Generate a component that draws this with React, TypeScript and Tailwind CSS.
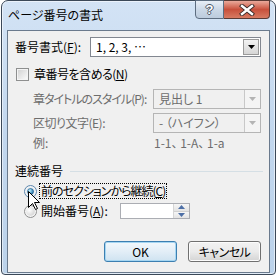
import React from 'react'

const jp = "font-['Noto_Sans_CJK_JP','Noto_Sans',sans-serif] [font-feature-settings:'palt']"

function Combo({ value, disabled, w }: { value: string; disabled?: boolean; w: string }) {
  return (
    <div className={`${w} h-[20px] flex border ${disabled ? 'border-[#b5b5b5] bg-[#f0f0f0] text-[#6d6d6d]' : 'border-[#828790] bg-white text-black'}`}>
      <div className="flex-1 pl-[5px] leading-[18px] whitespace-nowrap">{value}</div>
      <div className={`w-[16px] flex items-center justify-center border-l ${disabled ? 'border-[#c8c8c8] bg-[#f4f4f4]' : 'border-[#9a9a9a] bg-gradient-to-b from-[#f2f2f2] to-[#d6d6d6] m-[1px] border'}`}>
        <svg width="7" height="4" viewBox="0 0 7 4">
          <path d="M0 0h7L3.5 4z" fill={disabled ? '#b4b4b4' : '#000'} />
        </svg>
      </div>
    </div>
  )
}

function Radio({ checked }: { checked?: boolean }) {
  return (
    <svg width="13" height="13" viewBox="0 0 13 13" className="shrink-0">
      <defs>
        <radialGradient id={checked ? 'rc' : 'ru'} cx="0.35" cy="0.35" r="0.7">
          <stop offset="0" stopColor={checked ? '#bdf1ff' : '#ffffff'} />
          <stop offset="1" stopColor={checked ? '#1c6fa8' : '#d6d6d6'} />
        </radialGradient>
      </defs>
      <circle cx="6.5" cy="6.5" r="6" fill="#f4f4f4" stroke={checked ? '#5c86ad' : '#8e8f8f'} />
      <circle cx="6.5" cy="6.5" r="4.3" fill={checked ? '#e4eef6' : 'url(#ru)'} />
      {checked && <circle cx="6.5" cy="6.5" r="3" fill="url(#rc)" stroke="#1a4f7a" strokeWidth="0.6" />}
    </svg>
  )
}

export default function App() {
  return (
    <div className={`relative w-[277px] h-[275px] overflow-hidden bg-white text-[12px] text-black ${jp}`}>
      <div className="ml-[1px] w-[275px] h-[275px] flex flex-col rounded-t-[7px] rounded-b-[4px] border border-[#3b4858] bg-gradient-to-b from-[#d3e3f5] via-[#c2d7ee] to-[#bcd3eb] px-[5px] pb-[1px] shadow-[inset_0_0_0_1px_rgba(255,255,255,0.55)]">
        {/* title bar */}
        <div className="flex h-[29px]">
          <span className="pl-[1px] pt-[6px] leading-[16px] text-[12px] text-black whitespace-nowrap">ページ番号の書式</span>
          <div className="ml-auto -mt-[1px] flex h-[19px]">
            <div className="w-[29px] flex items-center justify-center rounded-bl-[4px] border border-[#5d6d80] bg-gradient-to-b from-[#e8eef6] via-[#cbd8e7] to-[#bccbdd]">
              <span className="font-['Liberation_Sans',sans-serif] font-bold text-[13px] leading-none text-white [text-shadow:1px_0_0_#4a5666,-1px_0_0_#4a5666,0_1px_0_#4a5666,0_-1px_0_#4a5666]">?</span>
            </div>
            <div className="w-[46px] flex items-center justify-center rounded-br-[4px] border border-l-0 border-[#5a3a34] bg-gradient-to-b from-[#e9a99b] via-[#c8503c] to-[#d77a62]">
              <svg width="16" height="12" viewBox="0 0 16 12">
                <path d="M3 2l10 8M13 2L3 10" stroke="#3a2a28" strokeWidth="4.2" strokeLinecap="square" />
                <path d="M3 2l10 8M13 2L3 10" stroke="#fff" strokeWidth="2.4" strokeLinecap="square" />
              </svg>
            </div>
          </div>
        </div>

        {/* client */}
        <div className="flex-1 flex flex-col border border-[#6a7a8d] bg-[#f0f0f0] pr-[8px] whitespace-nowrap">
          <div className="mt-[6px] flex h-[20px] items-center">
            <span className="pl-[7px] shrink-0">番号書式(<span className="underline">F</span>):</span>
            <div className="ml-auto">
              <Combo value="1, 2, 3, …" w="w-[171px]" />
            </div>
          </div>

          <div className="mt-[10px] flex h-[14px] items-center">
            <div className="ml-[8px] w-[13px] h-[13px] border border-[#8e8f8f] bg-[#f4f4f4] p-[1px]">
              <div className="w-full h-full bg-gradient-to-br from-[#d4d4d4] to-[#f9f9f9]" />
            </div>
            <span className="ml-[5px] tracking-[-0.5px]">章番号を含める(<span className="underline">N</span>)</span>
          </div>

          <div className="mt-[8px] flex h-[20px] items-center text-[#6d6d6d]">
            <span className="pl-[25px] shrink-0 tracking-[-1px]">章タイトルのスタイル(P):</span>
            <div className="ml-auto">
              <Combo value="見出し 1" disabled w="w-[108px]" />
            </div>
          </div>

          <div className="mt-[4px] flex h-[20px] items-center text-[#6d6d6d]">
            <span className="pl-[25px] shrink-0 tracking-[-0.5px]">区切り文字(E):</span>
            <div className="ml-auto">
              <Combo value="-  （ハイフン）" disabled w="w-[108px]" />
            </div>
          </div>

          <div className="mt-[2px] flex h-[16px] items-center text-[#6d6d6d]">
            <span className="pl-[25px]">例:</span>
            <span className="ml-auto w-[108px] pl-[1px]">1-1、 1-A、 1-a</span>
          </div>

          <div className="mt-[12px] flex h-[16px] items-center">
            <span className="pl-[7px]">連続番号</span>
            <div className="ml-[7px] mr-[-2px] flex-1 h-[1px] bg-[#d5dfe5]" />
          </div>

          <div className="mt-[4px] flex h-[16px] items-center">
            <div className="ml-[16px]"><Radio checked /></div>
            <span className="ml-[2px] px-[1px] leading-[14px] border border-dotted border-black tracking-[-1px]">
              前のセクションから継続(<span className="underline">C</span>)
            </span>
          </div>

          <div className="mt-[4px] flex h-[16px] items-center">
            <div className="ml-[16px]"><Radio /></div>
            <span className="ml-[4px]">開始番号(<span className="underline">A</span>):</span>
            <div className="ml-auto mr-[71px] w-[70px] h-[16px] flex border border-[#abadb3] bg-white">
              <div className="flex-1" />
              <div className="w-[16px] flex flex-col border-l border-[#d5d5d5]">
                <div className="flex-1 flex items-center justify-center bg-gradient-to-b from-[#f6f6f6] to-[#e3e3e3] border-b border-[#d0d0d0]">
                  <svg width="7" height="4" viewBox="0 0 7 4"><path d="M0 4h7L3.5 0z" fill="#4d6fa6" /></svg>
                </div>
                <div className="flex-1 flex items-center justify-center bg-gradient-to-b from-[#f6f6f6] to-[#e3e3e3]">
                  <svg width="7" height="4" viewBox="0 0 7 4"><path d="M0 0h7L3.5 4z" fill="#4d6fa6" /></svg>
                </div>
              </div>
            </div>
          </div>

          <div className="mt-[22px] flex justify-end gap-[11px]">
            <button className="w-[73px] h-[21px] rounded-[3px] border border-[#3c7fb1] bg-gradient-to-b from-[#f2f8fc] via-[#e3eef7] to-[#cfe3f1] shadow-[inset_0_0_0_1px_#a6d6f2] text-[12px] leading-[18px]">
              OK
            </button>
            <button className="w-[73px] h-[21px] rounded-[3px] border border-[#707070] bg-gradient-to-b from-[#f2f2f2] via-[#ebebeb] to-[#d4d4d4] shadow-[inset_0_0_0_1px_#fcfcfc] text-[12px] leading-[18px] tracking-[-0.5px]">
              キャンセル
            </button>
          </div>
        </div>
      </div>

      {/* mouse pointer */}
      <svg width="13" height="20" viewBox="0 0 13 20" className="absolute left-[28px] top-[191px]">
        <path d="M0.5 0.5V16.5L4.5 12.5L7.5 18.5L9.5 17.5L6.5 11.5H11.5Z" fill="#fff" stroke="#000" strokeWidth="1" strokeLinejoin="miter" />
      </svg>
    </div>
  )
}
